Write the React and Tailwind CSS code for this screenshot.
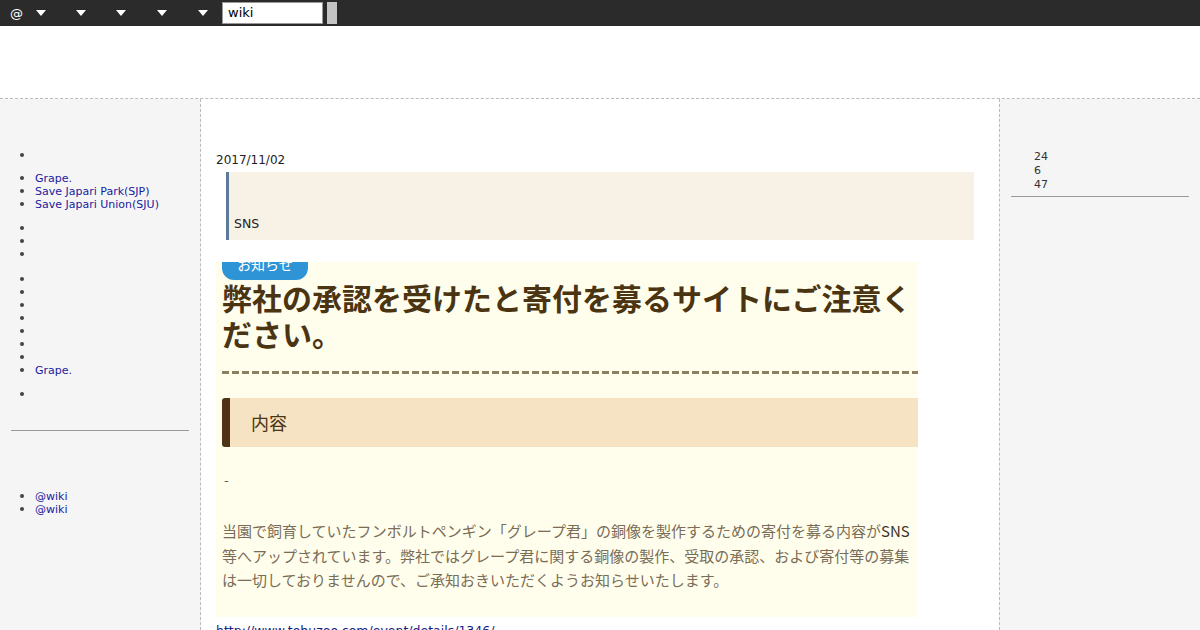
import React from "react";

const jp = { fontFamily: '"DejaVu Sans", "Noto Sans CJK JP", sans-serif' };
const jpBody = { fontFamily: '"Noto Sans CJK JP", "DejaVu Sans", sans-serif' };

function Tri() {
  return (
    <span className="inline-block w-0 h-0 border-l-[5px] border-r-[5px] border-t-[6px] border-l-transparent border-r-transparent border-t-white" />
  );
}

function List({ items, className = "" }) {
  return (
    <ul className={"list-disc pl-[35px] text-[11px] leading-[13px] text-[#333] marker:text-[14px] marker:text-[#444] " + className}>
      {items.map((t, i) => (
        <li key={i} className="h-[13px]">
          {t ? <a className="text-[#1a1aa0]">{t}</a> : null}
        </li>
      ))}
    </ul>
  );
}

export default function App() {
  return (
    <div className="w-[1200px] h-[630px] overflow-hidden bg-white" style={jp}>
      {/* top bar */}
      <div className="h-[26px] bg-[#2b2b2b] flex items-center text-white">
        <span className="ml-[10px] text-[13px] leading-none">@</span>
        <span className="ml-[13px] flex items-center"><Tri /></span>
        <span className="ml-[30px] flex items-center"><Tri /></span>
        <span className="ml-[30px] flex items-center"><Tri /></span>
        <span className="ml-[31px] flex items-center"><Tri /></span>
        <span className="ml-[31px] flex items-center"><Tri /></span>
        <div className="ml-[14px] w-[101px] h-[22px] bg-white border border-[#999] text-black text-[13px] leading-[20px] pl-[5px]">wiki</div>
        <div className="ml-[4px] w-[10px] h-[22px] bg-[#c4c4c4]" />
      </div>
      {/* header */}
      <div className="h-[73px] border-b border-dashed border-[#bbb]" />
      {/* body */}
      <div className="flex h-[531px]">
        {/* left sidebar */}
        <div className="w-[201px] bg-[#f5f5f5] border-r border-dashed border-[#bbb] shrink-0">
          <List items={[""]} className="mt-[49px]" />
          <List items={["Grape.", "Save Japari Park(SJP)", "Save Japari Union(SJU)"]} className="mt-[10px]" />
          <List items={["", "", ""]} className="mt-[11px]" />
          <List items={["", "", "", "", "", "", "", "Grape."]} className="mt-[12px]" />
          <List items={[""]} className="mt-[11px]" />
          <div className="mt-[30px] mx-[11px] h-px bg-[#999]" />
          <List items={["@wiki", "@wiki"]} className="mt-[58px]" />
        </div>
        {/* center */}
        <div className="w-[798px] shrink-0 pl-[15px] pr-[25px] pt-[54px]">
          <div className="text-[12px] leading-[14px] text-[#222]">2017/11/02</div>
          <div className="mt-[5px] ml-[10px] h-[68px] bg-[#f7f1e6] border-l-[3px] border-[#5b7b98] pl-[5px] pt-[45px] text-[12.5px] leading-[14px] text-[#222]">
            SNS
          </div>
          <div className="mt-[22px] w-[702px] bg-[#fffeec] overflow-hidden pl-[6px] pb-[24px]" style={jpBody}>
            <div className="-mt-[10px] w-[86px] h-[28px] rounded-[12px] bg-[#2f94d6] text-white text-[14px] leading-[24px] text-center">
              お知らせ
            </div>
            <h1 className="text-[30px] font-bold leading-[36px] text-[#4b3412] -mt-[1px]">
              弊社の承認を受けたと寄付を募るサイトにご注意ください。
            </h1>
            <div className="mt-[20px] h-[3px] bg-[repeating-linear-gradient(90deg,#8a7f60_0px,#8a7f60_7px,transparent_7px,transparent_10px)]" />
            <div className="mt-[24px] h-[49px] bg-[#f5e3c3] border-l-[8px] border-[#4f3317] rounded-l-[3px] pl-[21px] flex items-center text-[18px] text-[#4b3412]">
              内容
            </div>
            <div className="mt-[23px] text-[14px] leading-[18px] text-[#6b5d4a] pl-[2px]">-</div>
            <p className="mt-[31px] text-[15px] leading-[24.5px] text-[#7a6c57] pr-[6px]">
              当園で飼育していたフンボルトペンギン「グレープ君」の銅像を製作するための寄付を募る内容が<span className="text-[#3d3428]">SNS</span>等へアップされています。弊社ではグレープ君に関する銅像の製作、受取の承認、および寄付等の募集は一切しておりませんので、ご承知おきいただくようお知らせいたします。
            </p>
          </div>
          <div className="mt-[7px] text-[12.5px] leading-[14px] text-[#1a1a80] underline">
            http://www.tobuzoo.com/event/details/1346/
          </div>
        </div>
        {/* right sidebar */}
        <div className="flex-1 bg-[#f5f5f5] border-l border-dashed border-[#bbb]">
          <div className="mt-[51px] pl-[34px] text-[11px] leading-[14px] text-[#333]">
            <div>24</div>
            <div>6</div>
            <div>47</div>
          </div>
          <div className="mt-[4px] mx-[11px] h-px bg-[#999]" />
        </div>
      </div>
    </div>
  );
}
